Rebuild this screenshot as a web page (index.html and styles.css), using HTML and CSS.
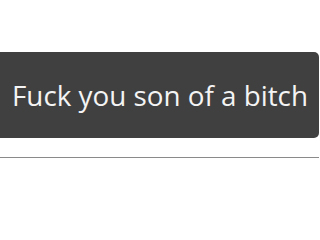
FILE: index.html
```html
<!DOCTYPE html>
<html>
<head>
<meta charset="utf-8">
<link rel="stylesheet" href="styles.css">
</head>
<body>
<div class="page">
  <div class="bubble"><span class="msg">Fuck you son of a bitch</span></div>
  <div class="rule"></div>
</div>
</body>
</html>
```
FILE: styles.css
```css
html, body {
  margin: 0;
  padding: 0;
  background: #ffffff;
  overflow: hidden;
}
.page {
  width: 320px;
  height: 214px;
  padding-top: 52px;
  box-sizing: border-box;
}
.bubble {
  margin-left: -4px;
  width: 323px;
  height: 86px;
  background: #404040;
  border-radius: 5px;
  display: flex;
  align-items: center;
  padding-left: 16px;
  box-sizing: border-box;
}
.msg {
  font-family: "Open Sans", sans-serif;
  font-size: 27.8px;
  color: #f4f4f4;
  white-space: nowrap;
}
.rule {
  margin-top: 19px;
  width: 319px;
  height: 1px;
  background: #8a8a8a;
}
```
